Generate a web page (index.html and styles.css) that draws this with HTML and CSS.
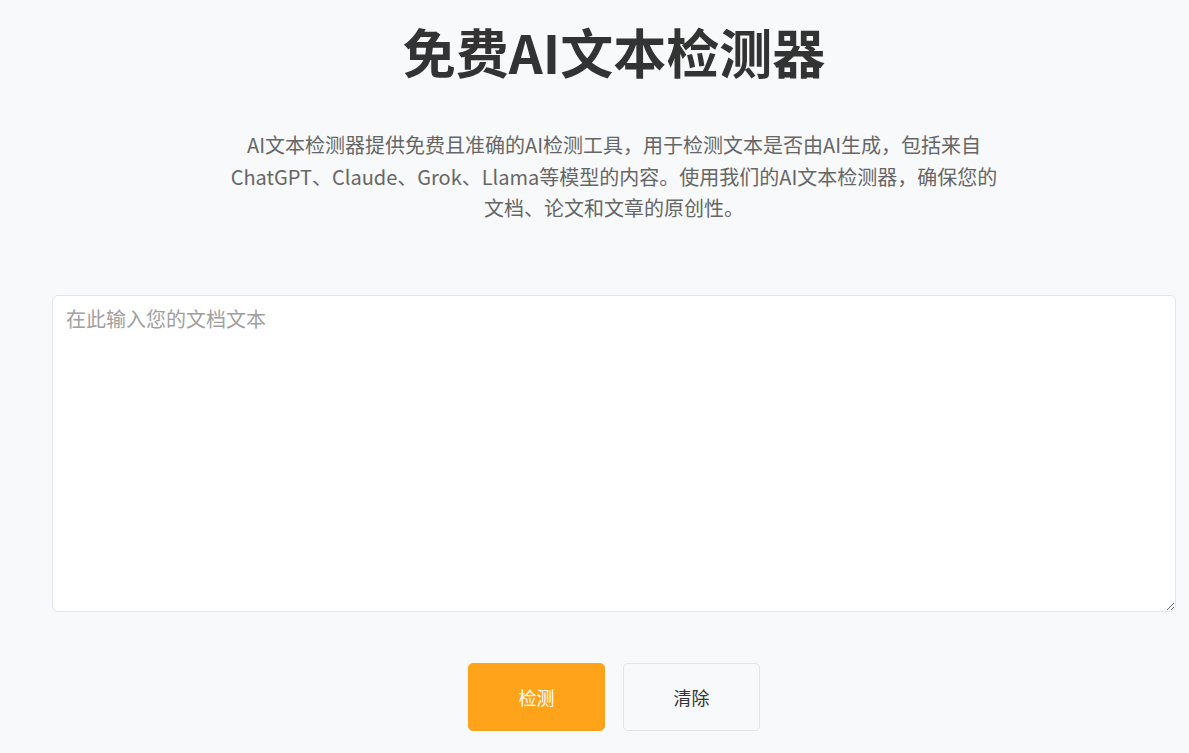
FILE: index.html
```html
<!DOCTYPE html>
<html lang="zh-CN">
<head>
<meta charset="utf-8">
<title>免费AI文本检测器</title>
<link rel="stylesheet" href="styles.css">
</head>
<body>
<main class="page">
  <h1 class="title">免费AI文本检测器</h1>
  <p class="intro">AI文本检测器提供免费且准确的AI检测工具，用于检测文本是否由AI生成，包括来自ChatGPT、Claude、Grok、Llama等模型的内容。使用我们的AI文本检测器，确保您的文档、论文和文章的原创性。</p>
  <textarea class="input" placeholder="在此输入您的文档文本"></textarea>
  <div class="actions">
    <button class="btn btn-primary" type="button">检测</button>
    <button class="btn btn-secondary" type="button">清除</button>
  </div>
</main>
</body>
</html>
```
FILE: styles.css
```css
html, body {
  margin: 0;
  padding: 0;
  background: #f8f9fa;
}
body {
  font-family: "Noto Sans CJK SC", "Noto Sans", sans-serif;
  color: #333;
}
.page {
  padding: 20px 13px 0 52px;
  display: flex;
  flex-direction: column;
  align-items: center;
}
.title {
  margin: 0;
  font-size: 53px;
  line-height: 63px;
  font-weight: 700;
  color: #333;
  text-align: center;
}
.intro {
  margin: 46px 0 0;
  max-width: 776px;
  font-size: 20px;
  line-height: 31.5px;
  color: #666;
  text-align: center;
}
.input {
  box-sizing: border-box;
  margin-top: 71px;
  width: 100%;
  height: 317px;
  padding: 8px 13px;
  border: 1px solid #e2e4e8;
  border-radius: 6px;
  background: #fff;
  font-family: "Noto Sans CJK SC", "Noto Sans", sans-serif;
  font-size: 20px;
  line-height: 1.5;
  color: #333;
  resize: vertical;
  outline: none;
}
.input::placeholder {
  color: #a0a0a0;
}
.actions {
  margin-top: 51px;
  display: flex;
  gap: 18px;
  justify-content: center;
}
.btn {
  box-sizing: border-box;
  width: 137px;
  height: 68px;
  border-radius: 5px;
  font-family: "Noto Sans CJK SC", "Noto Sans", sans-serif;
  font-size: 18px;
  cursor: pointer;
}
.btn-primary {
  background: #ffa31a;
  border: 1px solid #ffa31a;
  color: #fff;
}
.btn-secondary {
  background: #f8f9fa;
  border: 1px solid #e2e4e8;
  color: #333;
}
```
